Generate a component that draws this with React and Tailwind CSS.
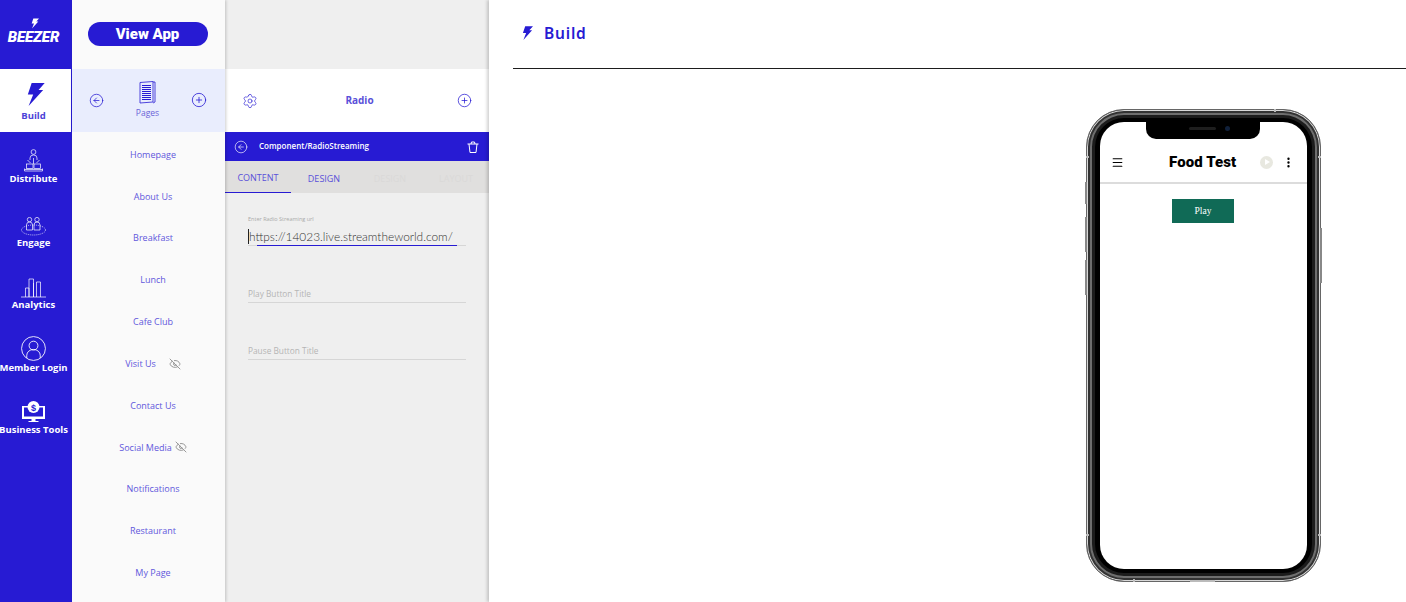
import React from "react";
import { Settings, EyeOff, CirclePlus, CircleArrowLeft, Menu, EllipsisVertical } from "lucide-react";

const Bolt = ({ className }) => (
  <svg viewBox="0 0 24 30" className={className} fill="currentColor">
    <path d="M7 0 H24 L16 9 H22 L3 30 L9 15 H2 Z" />
  </svg>
);

const Distribute = () => (
  <svg width="19" height="23" viewBox="0 0 19 23" fill="none" stroke="white" strokeWidth="0.7">
    <circle cx="9.5" cy="3" r="2.4" />
    <path d="M6 11 v-2 a3.5 3 0 0 1 7 0 v2" />
    <path d="M9.5 9 v6 M3.5 11 l3 3 M15.5 11 l-3 3" />
    <rect x="2.5" y="15" width="6.5" height="4.5" />
    <rect x="10" y="15" width="6.5" height="4.5" />
    <path d="M0.5 19.5 v2.5 h18 v-2.5 M0.5 20.5 h18" />
  </svg>
);
const Engage = () => (
  <svg width="25" height="19" viewBox="0 0 25 19" fill="none" stroke="white" strokeWidth="0.7">
    <circle cx="8.5" cy="2.6" r="2.2" /><circle cx="16" cy="2.6" r="2.2" />
    <path d="M5.5 13 v-5 a3 3 0 0 1 6 0 v5 Z M13 13 v-5 a3 3 0 0 1 6 0 v5 Z" />
    <ellipse cx="12.5" cy="13" rx="12" ry="5" strokeDasharray="1 1" />
  </svg>
);
const Analytics = () => (
  <svg width="25" height="20" viewBox="0 0 25 20" fill="none" stroke="white" strokeWidth="0.7">
    <path d="M0 19 h25 M4.5 19 v-9 h3.5 v9 M8 19 v-18 h4.5 v18 M12.5 19 v-14 M15.5 19 v-15 h4 v15" />
  </svg>
);
const Member = () => (
  <svg width="25" height="25" viewBox="0 0 26 26" fill="none" stroke="white" strokeWidth="0.9">
    <circle cx="13" cy="13" r="12.4" />
    <circle cx="13" cy="10" r="4.6" />
    <path d="M6 23 v-3 a7 6 0 0 1 14 0 v3" />
  </svg>
);
const Business = () => (
  <svg width="23" height="22" viewBox="0 0 23 22" fill="none">
    <path d="M0 5 h23 v13 h-23 Z" fill="white" />
    <path d="M2 6.5 h19 v8.5 h-19 Z" fill="#271bd3" />
    <path d="M2 15 h19" stroke="#271bd3" />
    <circle cx="11.5" cy="6" r="6" fill="white" />
    <text x="11.5" y="9.5" fontSize="9" fontWeight="700" textAnchor="middle" fill="#271bd3" fontFamily="Liberation Sans">$</text>
    <path d="M9.5 18 h4 v2 h3 v1 h-10 v-1 h3 Z" fill="white" />
  </svg>
);
const Doc = () => (
  <svg width="17" height="23" viewBox="0 0 17 23" fill="none" stroke="#271bd3" strokeWidth="0.8">
    <path d="M1 1.5 L14 0.5 V21 L1 22 Z" fill="#e9edfd" />
    <path d="M14 1 h2 v20 l-2 1" />
    <path d="M3 4.5 h9 M3 6.5 h9 M3 8.5 h9 M3 10.5 h9 M3 12.5 h9 M3 14.5 h9 M3 16.5 h9 M3 18.5 h9" strokeWidth="1" />
  </svg>
);
const Bin = () => (
  <svg width="12" height="12" viewBox="0 0 12 12" fill="none" stroke="white" strokeWidth="1">
    <path d="M0.5 3 h11 M4 3 L4.5 1 h3 L8 3 M2 3 l1 8.5 h6 L10 3" />
  </svg>
);

const navItems = [
  { label: "Distribute", icon: <Distribute />, h: "h-[64px]" },
  { label: "Engage", icon: <Engage />, h: "h-[62.4px]" },
  { label: "Analytics", icon: <Analytics />, h: "h-[62.4px]" },
  { label: "Member Login", icon: <Member />, h: "h-[62.4px]" },
  { label: "Business Tools", icon: <Business />, h: "h-[62.4px]" },
];

const pages = [
  ["Homepage"], ["About Us"], ["Breakfast"], ["Lunch"], ["Cafe Club"],
  ["Visit Us", "wide"], ["Contact Us"], ["Social Media", "tight"], ["Notifications"], ["Restaurant"], ["My Page"],
];

export default function App() {
  return (
    <div className="flex h-[602px] w-[1406px] overflow-hidden bg-white font-['Open_Sans',sans-serif]">
      {/* primary nav */}
      <nav className="w-[72px] shrink-0 bg-[#271bd3] text-white flex flex-col items-center">
        <div className="h-[69px] w-full flex items-center justify-center pr-[5px]">
          <div className="relative font-['Roboto',sans-serif] italic font-black text-[15px] leading-none tracking-[-0.1px] pt-[5px]">
            BEEZER
            <Bolt className="absolute left-[23px] top-[-7px] w-[8px] h-[11px] text-white" />
          </div>
        </div>
        <div className="h-[63px] w-[71px] self-start bg-white text-[#271bd3] flex flex-col items-center pt-[14px] pr-[4px]">
          <Bolt className="w-[19px] h-[23px] ml-[3px]" />
          <span className="text-[9.5px] font-bold leading-[12px] mt-[4px] text-[#4d43d8]">Build</span>
        </div>
        {navItems.map((n) => (
          <div key={n.label} className={`${n.h} w-full flex flex-col items-center pt-[10px] pr-[5px] shrink-0`}>
            <div className="h-[30px] flex items-end justify-center">{n.icon}</div>
            <span className="text-[9.5px] font-bold leading-[12px] mt-[1px] whitespace-nowrap">{n.label}</span>
          </div>
        ))}
      </nav>

      {/* pages column */}
      <aside className="w-[153px] shrink-0 bg-[#fafafa] shadow-[1px_0_3px_rgba(0,0,0,0.2)] z-10 flex flex-col">
        <div className="h-[69px] flex items-start justify-center pr-[2px] pt-[22px]">
          <div className="w-[120px] h-[24px] rounded-full bg-[#271bd3] text-white font-['Roboto',sans-serif] font-black text-[15px] leading-[24px] text-center">
            View App
          </div>
        </div>
        <div className="h-[63px] bg-[#e9edfd] flex items-center justify-between pl-[17px] pr-[18px]">
          <CircleArrowLeft size={15} strokeWidth={1.2} className="text-[#271bd3]" />
          <div className="flex flex-col items-center pb-[3px]">
            <Doc />
            <span className="text-[8.5px] text-[#6a63d8] leading-[11px] mt-[3px]">Pages</span>
          </div>
          <CirclePlus size={16} strokeWidth={1.2} className="text-[#271bd3] mt-[-1px]" />
        </div>
        <div className="flex flex-col pt-[1.5px] pl-[9px]">
          {pages.map(([p, eye]) => (
            <div key={p} className="h-[41.85px] shrink-0 flex items-center justify-center text-[9px] text-[#6157dc]">
              <span>{p}</span>
              {eye && <EyeOff size={12} strokeWidth={2} className={`text-[#999] ${eye === "wide" ? "ml-[13px]" : "ml-[3px]"}`} />}
            </div>
          ))}
        </div>
      </aside>

      {/* editor column */}
      <section className="w-[264px] shrink-0 bg-[#efefef] flex flex-col">
        <div className="h-[69px]" />
        <div className="h-[63px] bg-white flex items-center justify-between pl-[17px] pr-[17px]">
          <Settings size={16} strokeWidth={1} className="text-[#271bd3]" />
          <span className="text-[10px] font-bold text-[#5a50d9] ml-[4px]">Radio</span>
          <CirclePlus size={15} strokeWidth={1.2} className="text-[#271bd3]" />
        </div>
        <div className="h-[29px] bg-[#271bd3] text-white flex items-center pl-[9px] pr-[10px]">
          <CircleArrowLeft size={14} strokeWidth={1.1} />
          <span className="ml-[11px] text-[8px] font-semibold flex-1 mt-[-1px]">Component/RadioStreaming</span>
          <Bin />
        </div>
        <div className="h-[32px] bg-[#e0dfde] flex text-[9px] text-[#5a50d9] shrink-0">
          <div className="w-[66px] h-[32px] border-b border-[#271bd3] flex items-center justify-center pt-[3px]">CONTENT</div>
          <div className="w-[66px] flex items-center justify-center pt-[3px]">DESIGN</div>
          <div className="w-[66px] flex items-center justify-center pt-[3px] text-[#dad9d8]">DESIGN</div>
          <div className="w-[66px] flex items-center justify-center pt-[3px] text-[#dad9d8]">LAYOUT</div>
        </div>
        <div className="pl-[23px] pr-[23px] flex flex-col">
          <div className="pt-[23px] h-[53px] border-b border-[#d6d6d6] relative">
            <div className="text-[5.5px] leading-[6px] text-[#aaa]">Enter Radio Streaming url</div>
            <div className="mt-[7px] text-[11.9px] leading-[15px] font-light font-['Lato',sans-serif] text-[#333] border-l border-[#222] whitespace-nowrap">https://14023.live.streamtheworld.com/</div>
            <div className="absolute left-[9px] bottom-[-1px] w-[200px] h-px bg-[#271bd3]" />
          </div>
          <div className="h-[57px] flex items-end border-b border-[#d6d6d6] text-[8.3px] text-[#b5b5b5] pb-[2px]">Play Button Title</div>
          <div className="h-[57px] flex items-end border-b border-[#d6d6d6] text-[8.3px] text-[#b5b5b5] pb-[2px]">Pause Button Title</div>
        </div>
      </section>

      {/* main */}
      <main className="flex-1 min-w-0 shadow-[-2px_0_3px_rgba(0,0,0,0.18)] pl-[24px] flex flex-col">
        <header className="h-[69px] shrink-0 border-b border-[#1d1d1d] flex items-center pl-[9px] text-[#271bd3]">
          <Bolt className="w-[11px] h-[14px] mt-[-2px]" />
          <span className="ml-[11px] text-[15.5px] font-semibold tracking-[0.8px] mt-[-1px] font-['Noto_Sans',sans-serif]">Build</span>
        </header>
        <div className="pl-[573px] pt-[40px]">
          <div className="relative w-[235px] h-[473px] rounded-[38px] bg-black border border-[#666] shadow-[inset_0_0_0_1px_#d8d8d8,inset_0_0_0_3px_#333,inset_0_0_0_5px_#6e6e6e,inset_0_0_0_8px_#1c1c1c] pt-[12px] pl-[13px]">
            <div className="absolute left-[-2px] top-[72px] w-[2px] h-[22px] bg-[#888]" />
            <div className="absolute left-[-2px] top-[107px] w-[2px] h-[35px] bg-[#888]" />
            <div className="absolute left-[-2px] top-[150px] w-[2px] h-[35px] bg-[#888]" />
            <div className="absolute right-[-2px] top-[118px] w-[2px] h-[55px] bg-[#888]" />
            <div className="absolute left-[-1px] top-[46px] w-[3px] h-[2px] bg-[#bbb]" />
            <div className="absolute right-[-1px] top-[46px] w-[3px] h-[2px] bg-[#bbb]" />
            <div className="absolute left-[-1px] top-[424px] w-[3px] h-[2px] bg-[#bbb]" />
            <div className="absolute right-[-1px] top-[424px] w-[3px] h-[2px] bg-[#bbb]" />
            <div className="absolute left-[187px] top-[-1px] w-[2px] h-[3px] bg-[#bbb]" />
            <div className="absolute left-[46px] bottom-[-1px] w-[2px] h-[3px] bg-[#bbb]" />
            <div className="absolute left-[103px] bottom-[-1px] w-[25px] h-[2px] bg-[#bbb]" />
            <div className="w-[207px] h-[447px] rounded-[24px] bg-white overflow-hidden relative font-['Roboto',sans-serif]">
              <div className="absolute left-[46px] top-0 w-[114px] h-[17px] bg-black rounded-b-[10px] flex items-center justify-center gap-[9px] pb-[4px] pl-[12px]">
                <div className="w-[27px] h-[3px] rounded-full bg-[#1e1e1e]" />
                <div className="w-[5px] h-[5px] rounded-full bg-[#10203a]" />
              </div>
              <div className="h-[62px] border-b-2 border-[#dcdcdc] flex items-center pt-[20px] pl-[11px] text-black">
                <Menu size={13} strokeWidth={2} className="shrink-0" />
                <span className="ml-[45px] w-[70px] text-[15px] font-black tracking-[0.1px] leading-none whitespace-nowrap shrink-0">Food Test</span>
                <div className="ml-[21px] w-[13px] h-[13px] rounded-full bg-[#e8e8e0] flex items-center justify-center shrink-0">
                  <div className="w-0 h-0 ml-[1px] border-y-[3.5px] border-y-transparent border-l-[5px] border-l-white" />
                </div>
                <EllipsisVertical size={13} strokeWidth={2.4} className="ml-[9px] shrink-0" />
              </div>
              <div className="flex justify-center pt-[15px] pr-[1px]">
                <div className="w-[62px] h-[24px] bg-[#106a56] text-white text-[9.5px] leading-[24px] text-center font-['Liberation_Serif',serif]">Play</div>
              </div>
            </div>
          </div>
        </div>
      </main>
    </div>
  );
}
